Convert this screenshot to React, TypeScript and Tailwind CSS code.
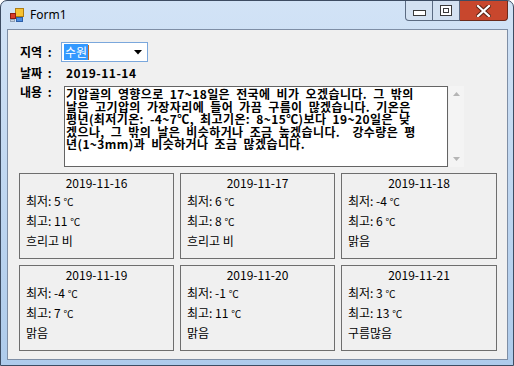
const forecast = [
  { date: '2019-11-16', low: '5', high: '11', sky: '흐리고 비' },
  { date: '2019-11-17', low: '6', high: '8', sky: '흐리고 비' },
  { date: '2019-11-18', low: '-4', high: '6', sky: '맑음' },
  { date: '2019-11-19', low: '-4', high: '7', sky: '맑음' },
  { date: '2019-11-20', low: '-1', high: '11', sky: '맑음' },
  { date: '2019-11-21', low: '3', high: '13', sky: '구름많음' },
];

const lines = [
  '기압골의 영향으로 17~18일은 전국에 비가 오겠습니다. 그 밖의',
  '날은 고기압의 가장자리에 들어 가끔 구름이 많겠습니다. 기온은',
  '평년(최저기온: -4~7℃, 최고기온: 8~15℃)보다 19~20일은 낮',
  '겠으나, 그 밖의 날은 비슷하거나 조금 높겠습니다.  강수량은 평',
  '년(1~3mm)과 비슷하거나 조금 많겠습니다.',
];

function AppIcon() {
  return (
    <svg width="16" height="16" viewBox="0 0 16 16">
      <rect x="6.5" y="1.5" width="8" height="8" fill="#f6c233" stroke="#b07d12" />
      <rect x="1.5" y="6.5" width="5" height="5" fill="#d93a2b" stroke="#8e1c12" />
      <rect x="7.5" y="10.5" width="6" height="4" fill="#4d8de0" stroke="#2c5fa8" />
      <rect x="1.5" y="12.5" width="4" height="2" fill="#c8d3e0" stroke="#8fa0b5" />
    </svg>
  );
}

function WeatherBox({ date, low, high, sky }: (typeof forecast)[number]) {
  return (
    <div className="h-[86px] border border-[#6e6e6e] text-[12px] text-black">
      <div className="h-[17px] leading-[17px] text-center">{date}</div>
      <div className="pl-[6px]">
        <div className="h-[20px] leading-[20px]">
          최저: {low} <span className="text-[10px]">℃</span>
        </div>
        <div className="h-[20px] leading-[20px]">
          최고: {high} <span className="text-[10px]">℃</span>
        </div>
        <div className="h-[20px] leading-[20px]">{sky}</div>
      </div>
    </div>
  );
}

export default function App() {
  return (
    <div className="w-[514px] h-[366px] overflow-hidden bg-white font-['Noto_Sans_CJK_KR',sans-serif]">
      <div className="w-[514px] h-[366px] flex flex-col rounded-t-[7px] border border-[#3d4c62] bg-[#bcd4ef] bg-linear-to-b from-[#d2e3f6] to-[#aecbeb]">
        {/* title bar */}
        <div className="h-[28px] flex items-start">
          <div className="flex items-center h-[27px] pl-[8px] gap-[5px]">
            <AppIcon />
            <span className="font-['Noto_Sans',sans-serif] text-[12px] text-black">Form1</span>
          </div>
          <div className="ml-auto mr-[5px] flex h-[20px]">
            <div className="w-[28px] h-[20px] flex items-center justify-center rounded-bl-[4px] border border-t-0 border-[#5b6b82] bg-[#d3e1f1]">
              <svg width="13" height="6" viewBox="0 0 13 6" className="mt-[5px]">
                <rect x="0.5" y="0.5" width="12" height="5" fill="#fff" stroke="#3a3a3a" />
              </svg>
            </div>
            <div className="w-[27px] h-[20px] flex items-center justify-center border-b border-r border-[#5b6b82] bg-[#d3e1f1]">
              <svg width="12" height="11" viewBox="0 0 12 11">
                <rect x="0.5" y="0.5" width="11" height="10" fill="#fff" stroke="#3a3a3a" />
                <rect x="3.5" y="3.5" width="5" height="4" fill="none" stroke="#3a3a3a" />
              </svg>
            </div>
            <div className="w-[48px] h-[20px] flex items-center justify-center rounded-br-[4px] border-b border-r border-[#6b2a1c] bg-[#c8472d]">
              <svg width="15" height="12" viewBox="0 0 15 12">
                <path d="M2 1 L13 11 M13 1 L2 11" stroke="#5a2416" strokeWidth="4.2" strokeLinecap="square" />
                <path d="M2 1 L13 11 M13 1 L2 11" stroke="#fff" strokeWidth="2.2" strokeLinecap="square" />
              </svg>
            </div>
          </div>
        </div>

        {/* client area */}
        <div className="ml-[6px] w-[501px] h-[331px] border border-[#7e8ea5] bg-[#f0f0f0] text-black">
          <div className="pl-[12px] pt-[12px] text-[12px] font-bold">
            <div className="flex items-center h-[20px]">
              <span className="w-[41px] [word-spacing:3px]">지역 :</span>
              <div className="w-[87px] h-[20px] border border-[#7aa7dc] bg-white flex items-center pl-[2px] pr-[5px]">
                <span className="bg-[#3399ff] text-white font-normal h-[16px] leading-[16px] px-[1px]">수원</span>
                <span className="w-px h-[15px] bg-[#c06a28]" />
                <svg width="8" height="5" viewBox="0 0 8 5" className="ml-auto">
                  <path d="M0 0 L8 0 L4 4.5 Z" fill="#000" />
                </svg>
              </div>
            </div>
            <div className="flex items-center h-[20px] mt-px">
              <span className="w-[46px] [word-spacing:3px]">날짜 :</span>
              <span className="tracking-[0.5px]">2019-11-14</span>
            </div>
            <div className="flex mt-[3px]">
              <span className="w-[44px] leading-[11px] [word-spacing:3px]">내용 :</span>
              <div className="w-[384px] h-[81px] border border-[#646464] bg-white pl-px pt-px">
                {lines.map((l) => (
                  <div key={l} className="whitespace-pre leading-[12.5px] tracking-[0.4px] [word-spacing:3px]">
                    {l}
                  </div>
                ))}
              </div>
              <div className="w-[15px] h-[81px] ml-px bg-[#f4f4f4] flex flex-col items-center justify-between py-[6px]">
                <svg width="7" height="4" viewBox="0 0 7 4">
                  <path d="M0 4 L7 4 L3.5 0 Z" fill="#b5b5b5" />
                </svg>
                <svg width="7" height="4" viewBox="0 0 7 4">
                  <path d="M0 0 L7 0 L3.5 4 Z" fill="#b5b5b5" />
                </svg>
              </div>
            </div>
          </div>

          <div className="ml-[11px] mt-[6px] grid grid-cols-[155px_155px_156px] gap-[6px]">
            {forecast.map((f) => (
              <WeatherBox key={f.date} {...f} />
            ))}
          </div>
        </div>
      </div>
    </div>
  );
}
